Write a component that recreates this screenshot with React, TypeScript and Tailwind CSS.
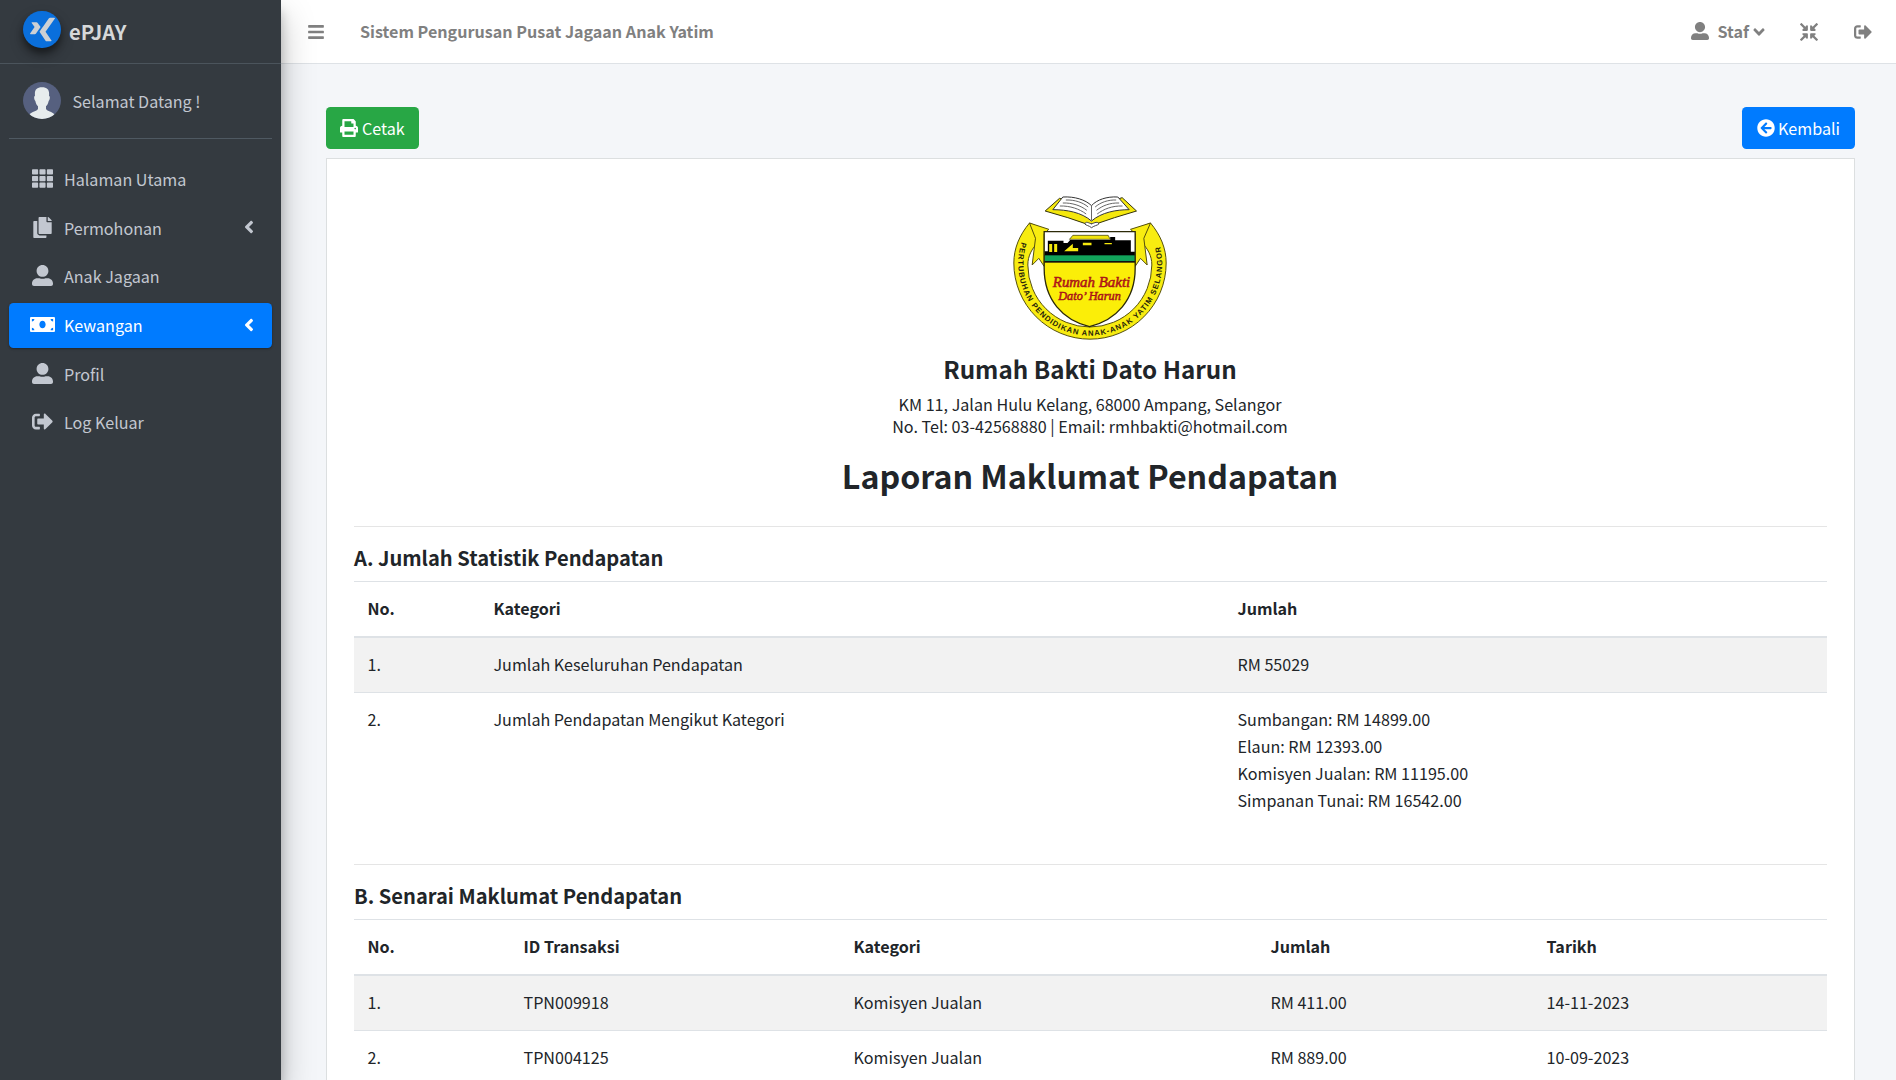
import React from "react";
import {
  FaTh,
  FaCopy,
  FaUserAlt,
  FaMoneyBill,
  FaSignOutAlt,
  FaAngleLeft,
  FaAngleDown,
  FaArrowCircleLeft,
  FaBars,
  FaPrint,
  FaXing,
  FaCompressArrowsAlt,
} from "react-icons/fa";

const navItems = [
  { label: "Halaman Utama", icon: FaTh, size: "size-[21px]" },
  { label: "Permohonan", icon: FaCopy, size: "size-[21px]", arrow: true },
  { label: "Anak Jagaan", icon: FaUserAlt, size: "size-[21px]" },
  { label: "Kewangan", icon: FaMoneyBill, size: "size-[25px]", arrow: true, active: true },
  { label: "Profil", icon: FaUserAlt, size: "size-[21px]" },
  { label: "Log Keluar", icon: FaSignOutAlt, size: "size-[21px]" },
];

const categoryTotals = [
  "Sumbangan: RM 14899.00",
  "Elaun: RM 12393.00",
  "Komisyen Jualan: RM 11195.00",
  "Simpanan Tunai: RM 16542.00",
];

const transactions = [
  ["1.", "TPN009918", "Komisyen Jualan", "RM 411.00", "14-11-2023"],
  ["2.", "TPN004125", "Komisyen Jualan", "RM 889.00", "10-09-2023"],
];

function Avatar() {
  return (
    <svg viewBox="0 0 114 111" className="-mt-[1px] h-[37px] w-[38px] shrink-0">
      <defs>
        <clipPath id="avatar-clip">
          <ellipse cx="57" cy="55.500" rx="57" ry="55.500" />
        </clipPath>
      </defs>
      <g clipPath="url(#avatar-clip)">
        <rect width="114" height="111" fill="#56607f" />
        <path
          d="M57 16c17 0 23 9 21 25 4 1 3 12-1 16-2 9-5 13-8 16v8c4 8 18 7 26 17v18H19V98c8-10 22-9 26-17v-8c-3-3-6-7-8-16-4-4-5-15-1-16-2-16 4-25 21-25z"
          fill="#e7eced"
        />
      </g>
    </svg>
  );
}

function Emblem() {
  return (
    <svg viewBox="0 0 540 495" className="mx-auto block h-[165px] w-[180px] -translate-x-[1.500px]">
      <defs>
        <path id="motto-arc" d="M66 171A216 216 0 1 0 478 171" />
        <clipPath id="shield-clip">
          <path d="M134 140H407V250C407 345 350 405 270 425C190 405 134 345 134 250Z" />
        </clipPath>
      </defs>

      {/* ribbon ring */}
      <path
        d="M90 114C60 150 43 190 43 234A228.500 228.500 0 0 0 500 234C500 190 483 150 453 114L400 137L420 165C445 190 457 212 457 240A186 186 0 0 1 85 240C85 212 97 190 122 165L142 137Z"
        fill="#f8ec10"
        stroke="#55500c"
        strokeWidth="3"
      />
      <path d="M90 114L148 133L134 146V244L118 220L98 240L108 160Z" fill="#f8ec10" stroke="#55500c" strokeWidth="3" />
      <path d="M453 114L393 133L407 146V244L423 220L443 240L433 160Z" fill="#f8ec10" stroke="#55500c" strokeWidth="3" />

      {/* shield */}
      <g clipPath="url(#shield-clip)">
        <rect x="130" y="136" width="282" height="292" fill="#fbee08" />
        <rect x="130" y="136" width="282" height="70" fill="#fff" />
        <path d="M134 213V199H145V167H192V174H204L212 165H332V156H347V166H394V200H407V213Z" />
        <path d="M220 151H326L332 163H210Z" fill="#f2e40c" stroke="#2a2a05" strokeWidth="2" />
        <path d="M149 177h9v24h-9zM164 177h9v24h-9zM194 199l26-23v13h16v10zM250 173h26v8h-26zM315 174h22v4h-22z" fill="#f5e80d" />
        <rect x="130" y="211" width="282" height="18" fill="#12a45b" />
        <rect x="130" y="228" width="282" height="5" fill="#111" />
      </g>
      <path
        d="M134 140H407V250C407 345 350 405 270 425C190 405 134 345 134 250Z"
        fill="none"
        stroke="#2c2a08"
        strokeWidth="4"
      />

      {/* script name */}
      <g fill="#c8141c" stroke="#a01216" strokeWidth="1.500" fontFamily="'Liberation Serif', serif" fontStyle="italic">
        <text x="160" y="307" fontSize="41" textLength="232" lengthAdjust="spacingAndGlyphs">Rumah Bakti</text>
        <text x="176" y="346" fontSize="37" textLength="188" lengthAdjust="spacingAndGlyphs">Dato’ Harun</text>
      </g>

      {/* open book */}
      <path d="M137 78L180 40L252 62L276 78L300 60L368 38L411 78L345 98L292 116H258L205 98Z" fill="#f5e80d" stroke="#33320b" strokeWidth="3" />
      <path d="M160 74L190 36C225 34 258 44 276 62C292 44 322 34 355 36L389 74C350 74 306 82 276 108C246 82 202 74 160 74Z" fill="#fff" stroke="#333" strokeWidth="3" />
      <path
        d="M276 62V106M199 45C225 44 250 52 266 66M190 54C218 53 244 62 262 76M181 63C212 62 240 72 260 87M350 45C326 44 303 52 287 66M359 54C331 53 309 62 291 76M369 63C338 62 313 72 293 87"
        fill="none"
        stroke="#666"
        strokeWidth="3"
      />
      <path d="M256 117C258 108 267 113 276 117C285 113 296 108 298 117C292 122 286 121 276 128C267 121 261 122 256 117Z" fill="#fff" stroke="#444" strokeWidth="3" />

      {/* motto */}
      <text fontFamily="'Liberation Sans', sans-serif" fontWeight="700" fontSize="23" fill="#25230a">
        <textPath href="#motto-arc" textLength="796" lengthAdjust="spacing">
          PERTUBUHAN PENDIDIKAN ANAK-ANAK YATIM SELANGOR
        </textPath>
      </text>
    </svg>
  );
}

function Sidebar() {
  return (
    <aside className="relative z-10 flex h-full w-[281px] shrink-0 flex-col bg-[#343a40] text-[#c2c7d0] shadow-[0_16px_32px_rgba(0,0,0,0.25),0_11px_11px_rgba(0,0,0,0.22)]">
      <div className="flex h-16 shrink-0 items-center border-b border-[#4b545c] pl-[23px]">
        <span className="-mt-[5px] flex h-[37px] w-[38px] items-center justify-center rounded-full bg-[#0a6fdc] shadow-[0_7px_14px_rgba(0,0,0,0.3),0_5px_6px_rgba(0,0,0,0.35)]">
          <FaXing preserveAspectRatio="none" className="h-[27px] w-[25px] shrink-0 text-[#cdd0d4]" />
        </span>
        <span className="-mt-[1px] ml-[8px] text-[20.150px] font-bold text-[#d6d8d9]">ePJAY</span>
      </div>
      <div className="mx-[9px] flex h-[75px] shrink-0 items-center border-b border-[#4f5962] pl-[14px]">
        <Avatar />
        <span className="ml-[11.500px] mt-[1px]">Selamat Datang !</span>
      </div>
      <nav className="mt-[18px] flex flex-col gap-[3.700px] px-[9px]">
        {navItems.map(({ label, icon: Icon, size, arrow, active }) => (
          <a
            key={label}
            className={
              active
                ? "flex h-[45px] items-center rounded-[4.500px] bg-[#007bff] pl-[18px] text-white shadow-[0_1px_3px_rgba(0,0,0,0.12),0_1px_2px_rgba(0,0,0,0.24)]"
                : "flex h-[45px] items-center rounded-[4.500px] pl-[18px]"
            }
          >
            <span className="flex w-[31px] -translate-y-px justify-center">
              <Icon className={size} />
            </span>
            <span className="ml-[6px]">{label}</span>
            {arrow && <FaAngleLeft className="ml-auto mr-[13px] size-[20px] -translate-y-px" />}
          </a>
        ))}
      </nav>
    </aside>
  );
}

function Topbar() {
  return (
    <header className="flex h-16 shrink-0 items-center border-b border-[#dee2e6] bg-white pl-[26px] pr-[24px] font-bold text-[#808080]">
      <FaBars className="size-[18px]" />
      <span className="ml-[35px]">Sistem Pengurusan Pusat Jagaan Anak Yatim</span>
      <span className="ml-auto flex items-center">
        <FaUserAlt className="size-[18px] -translate-y-px" />
        <span className="ml-[9px]">Staf</span>
        <FaAngleDown className="ml-[1px] size-[18px]" />
      </span>
      <FaCompressArrowsAlt className="ml-[32px] size-[18px]" />
      <FaSignOutAlt className="ml-[36px] size-[18px]" />
    </header>
  );
}

const cellUpper = "pl-[13.500px] text-left align-top pt-[12.500px]";
const cellLower = "pl-[13.500px] text-left align-top pt-[13.500px]";

export default function App() {
  return (
    <div className="flex h-screen overflow-hidden bg-[#f4f6f9] font-['Noto_Sans_CJK_SC','Noto_Sans',sans-serif] text-[16.120px] leading-[27px] text-[#212529]">
      <Sidebar />
      <div className="flex min-w-0 flex-1 flex-col">
        <Topbar />
        <main className="flex-1 overflow-hidden pl-[45px] pr-[41px] pt-[43px]">
          <div className="flex justify-between text-white">
            <button className="flex h-[42px] items-center gap-[4px] rounded-[4.500px] bg-[#28a745] px-[14px]">
              <FaPrint className="size-[18px]" />
              <span>Cetak</span>
            </button>
            <button className="flex h-[42px] items-center gap-[3px] rounded-[4.500px] bg-[#007bff] px-[15px]">
              <FaArrowCircleLeft className="size-[18px]" />
              <span>Kembali</span>
            </button>
          </div>

          <section className="mt-[9px] h-[1200px] border border-[#dcdfe0] bg-white px-[27px] pt-[26px]">
            <Emblem />
            <div className="-translate-x-[0.500px] text-center">
              <h4 className="mt-[3px] text-[24.200px] font-bold leading-[32px]">Rumah Bakti Dato Harun</h4>
              <p className="mt-[8px] leading-[22px]">
                KM 11, Jalan Hulu Kelang, 68000 Ampang, Selangor
                <br />
                No. Tel: 03-42568880 | Email: rmhbakti@hotmail.com
              </p>
              <h2 className="mt-[17px] text-[32.200px] font-bold leading-[43px]">Laporan Maklumat Pendapatan</h2>
            </div>

            <hr className="mt-[29px] border-[#e5e5e5]" />
            <h5 className="mt-[17px] text-[20.120px] font-bold leading-[27px]">A. Jumlah Statistik Pendapatan</h5>
            <table className="mt-[10px] w-full table-fixed border-collapse">
              <colgroup>
                <col className="w-[126px]" />
                <col className="w-[744px]" />
                <col />
              </colgroup>
              <thead>
                <tr className="h-[55px] border-b-2 border-t border-[#dee2e6]">
                  <th className={cellUpper}>No.</th>
                  <th className={cellUpper}>Kategori</th>
                  <th className={cellUpper}>Jumlah</th>
                </tr>
              </thead>
              <tbody>
                <tr className="h-[56px] bg-[#f2f2f2]">
                  <td className={cellLower}>1.</td>
                  <td className={cellLower}>Jumlah Keseluruhan Pendapatan</td>
                  <td className={cellLower}>RM 55029</td>
                </tr>
                <tr className="h-[144px] border-t border-[#dee2e6]">
                  <td className={cellUpper}>2.</td>
                  <td className={cellUpper}>Jumlah Pendapatan Mengikut Kategori</td>
                  <td className={cellUpper}>
                    {categoryTotals.map((line) => (
                      <div key={line}>{line}</div>
                    ))}
                  </td>
                </tr>
              </tbody>
            </table>

            <hr className="mt-[27px] border-[#e5e5e5]" />
            <h5 className="mt-[17px] text-[20.120px] font-bold leading-[27px]">B. Senarai Maklumat Pendapatan</h5>
            <table className="mt-[10px] w-full table-fixed border-collapse">
              <colgroup>
                <col className="w-[156px]" />
                <col className="w-[330px]" />
                <col className="w-[417px]" />
                <col className="w-[276px]" />
                <col />
              </colgroup>
              <thead>
                <tr className="h-[56px] border-b-2 border-t border-[#dee2e6]">
                  {["No.", "ID Transaksi", "Kategori", "Jumlah", "Tarikh"].map((name) => (
                    <th key={name} className={cellLower}>
                      {name}
                    </th>
                  ))}
                </tr>
              </thead>
              <tbody>
                {transactions.map((row, i) => (
                  <tr
                    key={row[1]}
                    className={i % 2 === 0 ? "h-[55px] bg-[#f2f2f2]" : "h-[55px] border-t border-[#dee2e6]"}
                  >
                    {row.map((cell) => (
                      <td key={cell} className={i === 0 ? cellUpper : cellLower}>
                        {cell}
                      </td>
                    ))}
                  </tr>
                ))}
              </tbody>
            </table>
          </section>
        </main>
      </div>
    </div>
  );
}
